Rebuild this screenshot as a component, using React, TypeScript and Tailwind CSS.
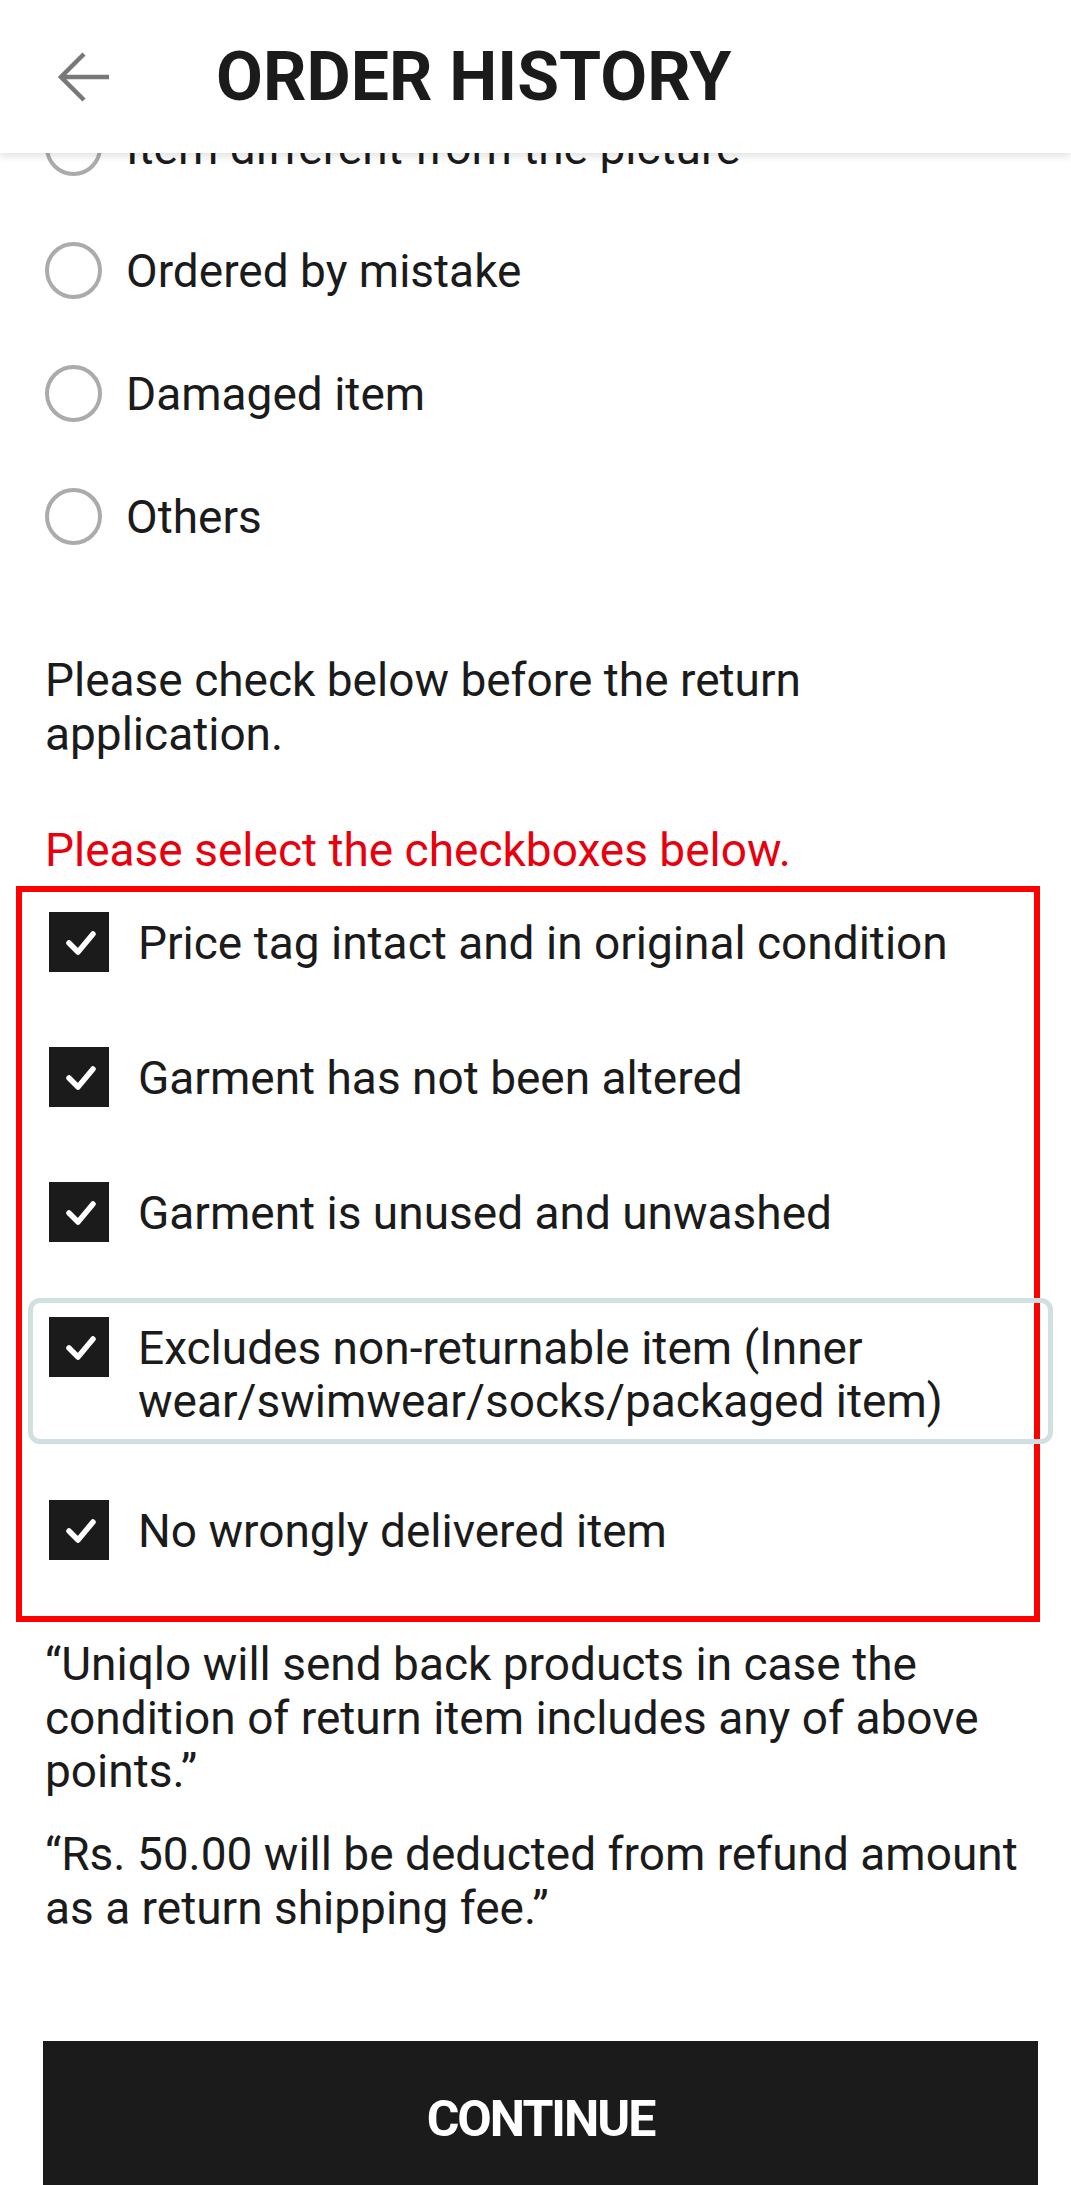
const reasons = [
  'Item different from the picture',
  'Ordered by mistake',
  'Damaged item',
  'Others',
];

const checks = [
  'Price tag intact and in original condition',
  'Garment has not been altered',
  'Garment is unused and unwashed',
  'Excludes non-returnable item (Inner wear/swimwear/socks/packaged item)',
  'No wrongly delivered item',
];

function CheckBox() {
  return (
    <div className="h-[60px] w-[60px] shrink-0 bg-[#1b1b1b]">
      <svg width="60" height="60" viewBox="0 0 60 60" fill="none">
        <path d="M20 31l9 9 15-18" stroke="#fff" strokeWidth="5.5" strokeLinecap="round" strokeLinejoin="round" />
      </svg>
    </div>
  );
}

export default function App() {
  return (
    <div className="relative h-[2185px] overflow-hidden bg-white font-['Roboto',sans-serif] text-[#1b1b1b]">
      <header className="absolute inset-x-0 top-0 z-10 flex h-[153px] items-center bg-white shadow-[0_3px_8px_rgba(0,0,0,0.12)]">
        <svg className="ml-[56px]" width="56" height="56" viewBox="0 0 56 56" fill="none">
          <path d="M53 28H6M28 5L5 28l23 23" stroke="#787878" strokeWidth="4.5" />
        </svg>
        <h1 className="ml-[104px] text-[68px] font-bold leading-none">ORDER HISTORY</h1>
      </header>

      <main className="pl-[45px] pr-[33px] pt-[86px]">
        <div className="flex flex-col">
          {reasons.map((r) => (
            <div key={r} className="flex h-[123px] items-center gap-[24px]">
              <span className="h-[57px] w-[57px] shrink-0 rounded-full border-[4.5px] border-[#ababab]" />
              <span className="text-[46px] leading-[54px]">{r}</span>
            </div>
          ))}
        </div>

        <p className="mt-[75px] text-[46px] leading-[54px]">Please check below before the return application.</p>
        <p className="mt-[62px] text-[46px] leading-[54px] text-[#e8000d]">Please select the checkboxes below.</p>
      </main>

      <div className="ml-[16px] mr-[31px] mt-[9px] border-[6px] border-[#ff0000] pb-[37px] pt-[1px]">
        <div className="flex flex-col gap-[37px]">
          {checks.map((c, i) => (
            <div
              key={c}
              className={
                i === 3
                  ? 'ml-[6px] mr-[-19px] flex items-start gap-[29px] rounded-xl border-[5px] border-[#cfdfe2] pb-[11px] pl-[16px] pr-[20px] pt-[14px]'
                  : 'ml-[6px] mr-[-19px] flex items-start gap-[29px] rounded-xl border-[5px] border-transparent py-[14px] pl-[16px] pr-[20px]'
              }
            >
              <CheckBox />
              <span className="mt-[5px] text-[46px] leading-[53px]">{c}</span>
            </div>
          ))}
        </div>
      </div>

      <section className="pl-[45px] pr-[33px]">
        <p className="mt-[16px] text-[46px] leading-[53.5px]">
          “Uniqlo will send back products in case the condition of return item includes any of above points.”
        </p>
        <p className="mt-[28px] text-[46px] leading-[54px]">
          “Rs. 50.00 will be deducted from refund amount as a return shipping fee.”
        </p>
      </section>

      <div className="ml-[43px] mr-[33px] mt-[106px] flex h-[156px] items-center justify-center bg-[#1b1b1b]">
        <span className="text-[50px] font-bold leading-none tracking-[-2px] text-white">CONTINUE</span>
      </div>
    </div>
  );
}
